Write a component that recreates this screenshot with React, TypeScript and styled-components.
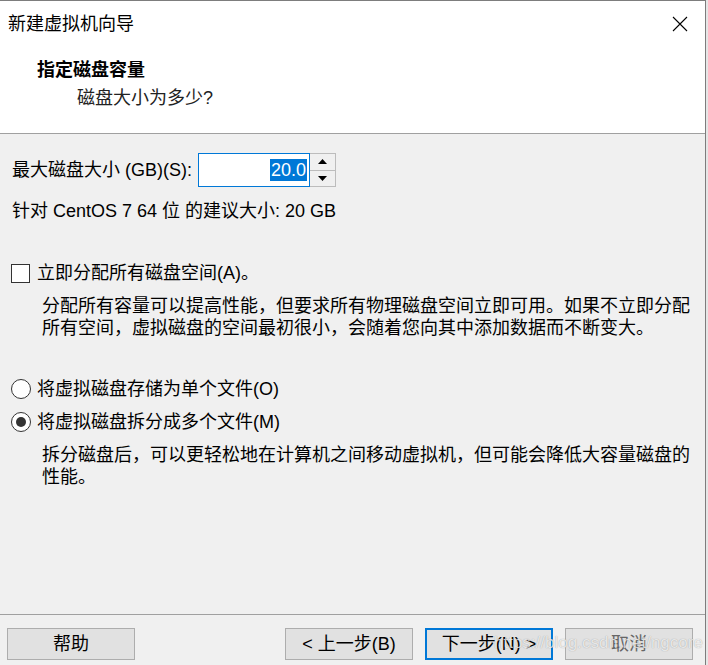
import React, { useState } from "react";
import styled, { createGlobalStyle } from "styled-components";

const GlobalStyle = createGlobalStyle`
    html, body {
        margin: 0;
        padding: 0;
        background: #e6e6e6;
    }
    body {
        font-family: "Liberation Sans", "Noto Sans CJK SC", sans-serif;
        font-size: 18px;
        color: #000;
    }
`;

const Window = styled.div`
    width: 706px;
    height: 665px;
    box-sizing: border-box;
    border-top: 1px solid #7d7d7d;
    border-right: 1px solid #7d7d7d;
    background: #f0f0f0;
    display: flex;
    flex-direction: column;
    position: relative;
`;

const TitleBar = styled.div`
    height: 45px;
    background: #fff;
    display: flex;
    align-items: center;
    justify-content: space-between;
    padding: 0 17px 0 8px;
`;

const TitleText = styled.span`
    line-height: 24px;
`;

const CloseBtn = styled.div`
    width: 16px;
    height: 16px;
    display: flex;
`;

const Header = styled.div`
    height: 88px;
    box-sizing: border-box;
    background: #fff;
    border-bottom: 1px solid #a0a0a0;
    padding: 12px 0 0 37px;
    display: flex;
    flex-direction: column;
`;

const HeaderTitle = styled.div`
    font-weight: bold;
    line-height: 24px;
`;

const HeaderSub = styled.div`
    line-height: 24px;
    margin: 4px 0 0 40px;
    color: #222;
`;

const Content = styled.div`
    flex: 1;
    padding: 19px 0 0 11px;
    display: flex;
    flex-direction: column;
`;

const SizeRow = styled.div`
    height: 34px;
    display: flex;
    align-items: center;
    padding-left: 1px;
`;

const Label = styled.span`
    line-height: 22px;
    white-space: nowrap;
`;

const Spin = styled.div`
    display: flex;
    margin-left: 6px;
    height: 34px;
`;

const SpinInput = styled.div`
    width: 112px;
    height: 34px;
    box-sizing: border-box;
    border: 1px solid #0078d7;
    background: #fff;
    display: flex;
    align-items: center;
    justify-content: flex-end;
    padding-right: 2px;
`;

const Selected = styled.span`
    background: #0078d7;
    color: #fff;
    line-height: 22px;
    padding: 0 1px;
`;

const SpinButtons = styled.div`
    width: 26px;
    display: flex;
    flex-direction: column;
    border: 1px solid #bcbcbc;
    border-left: none;
    box-sizing: border-box;
    background: #f0f0f0;
`;

const SpinBtn = styled.div<{ $down?: boolean }>`
    flex: 1;
    display: flex;
    align-items: center;
    justify-content: center;
    border-top: ${p => (p.$down ? "1px solid #bcbcbc" : "none")};
`;

const Hint = styled.div`
    line-height: 22px;
    margin: 13px 0 0 1px;
`;

const OptionRow = styled.label<{ $gap: number }>`
    display: flex;
    align-items: center;
    height: 22px;
    margin-top: ${p => p.$gap}px;
`;

const CheckBox = styled.span`
    width: 19px;
    height: 19px;
    box-sizing: border-box;
    border: 1px solid #333;
    background: #fff;
    margin-right: 7px;
`;

const Radio = styled.span<{ $checked?: boolean }>`
    width: 20px;
    height: 20px;
    box-sizing: border-box;
    border: 1px solid #333;
    border-radius: 50%;
    background: #fff;
    margin-right: 6px;
    display: flex;
    align-items: center;
    justify-content: center;
    &::after {
        content: "";
        width: 10px;
        height: 10px;
        border-radius: 50%;
        background: ${p => (p.$checked ? "#333" : "transparent")};
    }
`;

const Desc = styled.p`
    margin: 11px 0 0 31px;
    width: 652px;
    line-height: 22px;
`;

const Footer = styled.div`
    height: 51px;
    box-sizing: border-box;
    border-top: 1px solid #a0a0a0;
    padding: 13px 12px 0 7px;
    display: flex;
    gap: 12px;
`;

const Button = styled.button<{ $primary?: boolean; $push?: boolean; $dim?: boolean }>`
    width: 128px;
    height: 32px;
    box-sizing: border-box;
    font: inherit;
    line-height: 22px;
    padding: 0;
    background: #e1e1e1;
    color: ${p => (p.$dim ? "#666" : "#000")};
    border: ${p => (p.$primary ? "2px solid #0078d7" : "1px solid #adadad")};
    margin-left: ${p => (p.$push ? "auto" : "0")};
`;

const Watermark = styled.span`
    position: absolute;
    left: 494px;
    top: 632px;
    font-size: 17px;
    color: rgba(255, 255, 255, 0.75);
    text-shadow: 0 0 1px rgba(0, 0, 0, 0.35);
    pointer-events: none;
    white-space: nowrap;
`;

function Arrow({ up }: { up?: boolean }) {
    return (
        <svg width="9" height="5" viewBox="0 0 9 5">
            <polygon points={up ? "0,5 4.5,0 9,5" : "0,0 9,0 4.5,5"} fill="#000" />
        </svg>
    );
}

function App() {
    const [split, setSplit] = useState(true);

    return (
        <>
            <GlobalStyle />
            <Window>
                <TitleBar>
                    <TitleText>新建虚拟机向导</TitleText>
                    <CloseBtn>
                        <svg width="16" height="16" viewBox="0 0 16 16">
                            <path d="M1 1L15 15M15 1L1 15" stroke="#000" strokeWidth="1.1" />
                        </svg>
                    </CloseBtn>
                </TitleBar>
                <Header>
                    <HeaderTitle>指定磁盘容量</HeaderTitle>
                    <HeaderSub>磁盘大小为多少?</HeaderSub>
                </Header>
                <Content>
                    <SizeRow>
                        <Label>最大磁盘大小 (GB)(S):</Label>
                        <Spin>
                            <SpinInput>
                                <Selected>20.0</Selected>
                            </SpinInput>
                            <SpinButtons>
                                <SpinBtn>
                                    <Arrow up />
                                </SpinBtn>
                                <SpinBtn $down>
                                    <Arrow />
                                </SpinBtn>
                            </SpinButtons>
                        </Spin>
                    </SizeRow>
                    <Hint>针对 CentOS 7 64 位 的建议大小: 20 GB</Hint>
                    <OptionRow $gap={40}>
                        <CheckBox />
                        <Label>立即分配所有磁盘空间(A)。</Label>
                    </OptionRow>
                    <Desc>
                        分配所有容量可以提高性能，但要求所有物理磁盘空间立即可用。如果不立即分配所有空间，虚拟磁盘的空间最初很小，会随着您向其中添加数据而不断变大。
                    </Desc>
                    <OptionRow $gap={39} onClick={() => setSplit(false)}>
                        <Radio $checked={!split} />
                        <Label>将虚拟磁盘存储为单个文件(O)</Label>
                    </OptionRow>
                    <OptionRow $gap={11} onClick={() => setSplit(true)}>
                        <Radio $checked={split} />
                        <Label>将虚拟磁盘拆分成多个文件(M)</Label>
                    </OptionRow>
                    <Desc>
                        拆分磁盘后，可以更轻松地在计算机之间移动虚拟机，但可能会降低大容量磁盘的性能。
                    </Desc>
                </Content>
                <Footer>
                    <Button>帮助</Button>
                    <Button $push>&lt; 上一步(B)</Button>
                    <Button $primary>下一步(N) &gt;</Button>
                    <Button $dim>取消</Button>
                </Footer>
                <Watermark>https://blog.csdn.net/ngcore</Watermark>
            </Window>
        </>
    );
}

export default App;
